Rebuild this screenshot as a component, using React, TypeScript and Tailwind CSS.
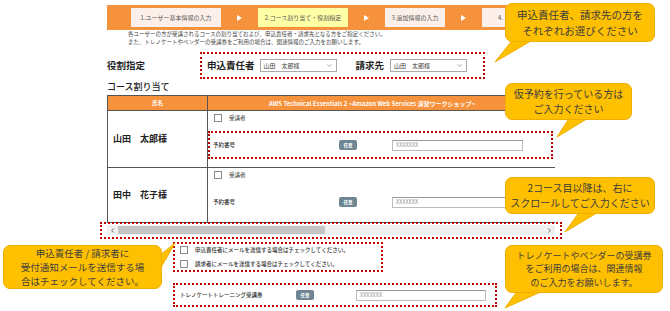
import React from 'react';
import { ChevronDown, ChevronLeft, ChevronRight } from 'lucide-react';

function Arrow() {
  return (
    <div className="flex w-[37px] shrink-0 items-center justify-center">
      <svg width="5" height="6" viewBox="0 0 5 6">
        <polygon points="0,0 5,3 0,6" fill="#fff" />
      </svg>
    </div>
  );
}

function Step({ label, className }: { label: string; className: string }) {
  return (
    <div
      className={`flex h-[19px] shrink-0 items-center whitespace-nowrap text-[6px] text-[#555] ${className}`}
    >
      {label}
    </div>
  );
}

function Select({ className }: { className: string }) {
  return (
    <div
      className={`flex h-[13px] items-center justify-between border border-[#aaa] bg-white pl-[3px] pr-[3px] text-[6px] text-[#333] ${className}`}
    >
      <span>山田　太郎様</span>
      <ChevronDown className="h-[7px] w-[7px] text-[#666]" strokeWidth={2} />
    </div>
  );
}

function Checkbox() {
  return <span className="inline-block h-[8px] w-[8px] shrink-0 border border-[#8a8a8a] bg-white" />;
}

function Badge() {
  return (
    <div className="flex h-[10px] w-[18px] shrink-0 items-center justify-center rounded-[2px] bg-[#6e8593] text-[4.5px] font-bold text-white">
      任意
    </div>
  );
}

function TextInput({ className }: { className: string }) {
  return (
    <div
      className={`flex h-[11px] items-center border border-[#bbb] border-t-[#999] bg-white pl-[3px] text-[5.5px] text-[#999] ${className}`}
    >
      XXXXXXX
    </div>
  );
}

function Callout({ className, lines }: { className: string; lines: string[] }) {
  return (
    <div
      className={`absolute flex items-center justify-center rounded-[7px] border border-[#f0ae00] bg-[#ffc000] text-center text-[#3d3d3d] ${className}`}
    >
      <p>
        {lines.map((l, i) => (
          <React.Fragment key={i}>
            {i > 0 && <br />}
            {l}
          </React.Fragment>
        ))}
      </p>
    </div>
  );
}

export default function App() {
  return (
    <div className="relative h-[311px] w-[670px] overflow-hidden bg-white font-['Noto_Sans_CJK_JP',sans-serif] text-[#333]">
      <div className="ml-[107px] w-[455px] pt-[5px]">
        {/* step bar */}
        <div className="flex h-[25px] w-[455px] items-center overflow-hidden bg-[#f7923c] pl-[24px]">
          <Step label="1.ユーザー基本情報の入力" className="w-[90px] justify-center bg-[#fdf0ea]" />
          <Arrow />
          <Step label="2.コース割り当て・役割指定" className="w-[90px] justify-center bg-[#ffffa6]" />
          <Arrow />
          <Step label="3.追加情報の入力" className="w-[60px] justify-center bg-[#fdf0ea]" />
          <Arrow />
          <Step label="4." className="w-[80px] bg-[#fdf0ea] pl-[16px]" />
        </div>

        {/* description */}
        <div className="pl-[21px] text-[5.5px] leading-[8px] text-[#444]">
          <p>各ユーザーの方が受講されるコースの割り当ておよび、申込責任者・請求先となる方をご指定ください。</p>
          <p>また、トレノケートやベンダーの受講券をご利用の場合は、関連情報のご入力をお願いします。</p>
        </div>

        {/* role */}
        <div className="mt-[6px] flex items-center">
          <div className="w-[93px] text-[9.5px] font-bold text-[#222]">役割指定</div>
          <div className="flex h-[27px] w-[285px] items-center border-2 border-dotted border-[#c00000] pl-[5px]">
            <span className="text-[9.5px] font-bold text-[#222]">申込責任者</span>
            <Select className="ml-[5px] w-[77px]" />
            <span className="ml-[19px] text-[9.5px] font-bold text-[#222]">請求先</span>
            <Select className="ml-[6px] w-[77px]" />
          </div>
        </div>

        <div className="h-[16px] text-[9px] font-medium leading-[16px] text-[#222]">コース割り当て</div>

        {/* table */}
        <div className="w-[448px] border-l border-[#555]">
          <div className="flex h-[15px] border-t border-[#555] bg-[#f7923c] text-white">
            <div className="flex w-[100px] shrink-0 items-center justify-center border-r border-[#555] text-[5.5px] font-bold">
              氏名
            </div>
            <div className="flex flex-1 items-center overflow-hidden whitespace-nowrap pl-[61px] text-[6px] font-bold">
              AWS Technical Essentials 2 ~Amazon Web Services 演習ワークショップ~
            </div>
          </div>

          <div className="flex h-[57px] border-t border-[#555]">
            <div className="flex w-[100px] shrink-0 items-center border-r border-[#555] pl-[5px] text-[9px] font-bold text-[#222]">
              山田　太郎様
            </div>
            <div className="flex-1">
              <div className="flex items-center gap-[7px] pl-[6px] pt-[3px]">
                <Checkbox />
                <span className="text-[5.5px] leading-[8px]">受講者</span>
              </div>
              <div className="mt-[9px] flex h-[28px] w-[345px] items-center border-2 border-dotted border-[#c00000] pl-[3px]">
                <span className="w-[126px] shrink-0 text-[5.5px] font-medium">予約番号</span>
                <Badge />
                <TextInput className="ml-[35px] w-[131px]" />
              </div>
            </div>
          </div>

          <div className="flex h-[56px] border-y border-[#555]">
            <div className="flex w-[100px] shrink-0 items-center border-r border-[#555] pl-[5px] text-[9px] font-bold text-[#222]">
              田中　花子様
            </div>
            <div className="flex-1">
              <div className="flex items-center gap-[7px] pl-[6px] pt-[3px]">
                <Checkbox />
                <span className="text-[5.5px] leading-[8px]">受講者</span>
              </div>
              <div className="mt-[17px] flex h-[12px] items-center pl-[5px]">
                <span className="w-[126px] shrink-0 text-[5.5px] font-medium">予約番号</span>
                <Badge />
                <TextInput className="ml-[35px] w-[131px]" />
              </div>
            </div>
          </div>
        </div>

        {/* scrollbar */}
        <div className="-ml-[7px] -mt-[1px] h-[17px] w-[462px] border-2 border-dotted border-[#c00000] pl-[5px] pt-[1px]">
          <div className="flex h-[10px] w-[448px] items-center bg-[#f0f0f0]">
            <div className="flex w-[11px] shrink-0 items-center justify-center">
              <ChevronLeft className="h-[7px] w-[7px] text-[#555]" strokeWidth={3} />
            </div>
            <div className="h-[8px] w-[207px] bg-[#c4c4c4]" />
            <div className="flex-1" />
            <div className="flex w-[11px] shrink-0 items-center justify-center">
              <ChevronRight className="h-[7px] w-[7px] text-[#555]" strokeWidth={3} />
            </div>
          </div>
        </div>

        {/* mail checks */}
        <div className="ml-[66px] mt-[3px] flex h-[30px] w-[210px] flex-col gap-[6px] border-2 border-dotted border-[#c00000] pl-[5px] pt-[2px]">
          <div className="flex items-center gap-[7px]">
            <Checkbox />
            <span className="text-[5.5px] font-medium leading-[8px]">申込責任者にメールを送信する場合はチェックしてください。</span>
          </div>
          <div className="flex items-center gap-[7px]">
            <Checkbox />
            <span className="text-[5.5px] font-medium leading-[8px]">請求者にメールを送信する場合はチェックしてください。</span>
          </div>
        </div>

        {/* voucher */}
        <div className="ml-[66px] mt-[11px] flex h-[24px] w-[324px] items-center border-2 border-dotted border-[#c00000] pl-[5px]">
          <span className="w-[116px] shrink-0 text-[5.5px] font-medium">トレノケートトレーニング受講券</span>
          <Badge />
          <TextInput className="ml-[42px] w-[130px]" />
        </div>
      </div>

      {/* callout tails */}
      <svg className="pointer-events-none absolute left-0 top-0" width="670" height="311" viewBox="0 0 670 311">
        <g fill="#ffc000" stroke="#f0ae00" strokeWidth="1">
          <polygon points="514,38 536,38 495,62" />
          <polygon points="570,117 590,117 557,137" />
          <polygon points="580,211 600,211 565,232" />
          <polygon points="159,256 159,271 175,243" />
          <polygon points="518,290 545,290 505,308" />
        </g>
      </svg>

      <Callout
        className="left-[505px] top-[3px] h-[39px] w-[150px] text-[10.5px] leading-[16px]"
        lines={['申込責任者、請求先の方を', 'それぞれお選びください']}
      />
      <Callout
        className="left-[505px] top-[83px] h-[37px] w-[127px] text-[10px] leading-[14.5px]"
        lines={['仮予約を行っている方は', 'ご入力ください']}
      />
      <Callout
        className="left-[505px] top-[177px] h-[37px] w-[150px] text-[10px] leading-[14.5px]"
        lines={['2コース目以降は、右に', 'スクロールしてご入力ください']}
      />
      <Callout
        className="left-[3px] top-[245px] h-[44px] w-[159px] text-[9.5px] leading-[14px]"
        lines={['申込責任者 / 請求者に', '受付通知メールを送信する場', '合はチェックしてください。']}
      />
      <Callout
        className="left-[505px] top-[245px] h-[48px] w-[158px] text-[9px] leading-[13.5px]"
        lines={['トレノケートやベンダーの受講券', 'をご利用の場合は、関連情報', 'のご入力をお願いします。']}
      />
    </div>
  );
}
